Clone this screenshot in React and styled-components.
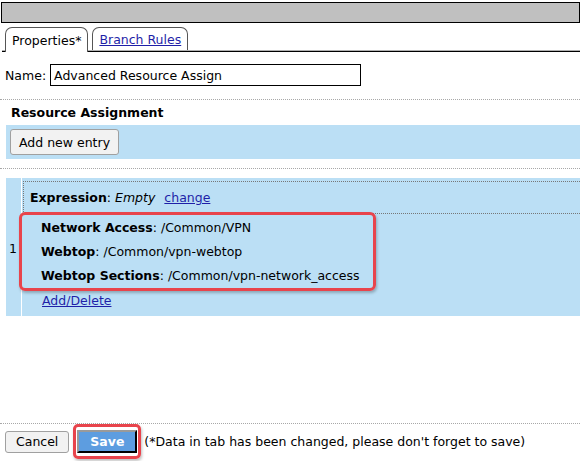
import styled, { createGlobalStyle } from 'styled-components'

const GlobalStyle = createGlobalStyle`
body {
  margin: 0;
  font-family: "DejaVu Sans", Verdana, sans-serif;
  font-size: 12px;
  color: #000;
  background: #fff;
}
`

const Page = styled.div`
width: 580px;
height: 461px;
display: flex;
flex-direction: column;
overflow: hidden;
`

const TitleBar = styled.div`
margin: 2px 0 0 1px;
height: 19px;
background: #c0c0c0;
border: 1px solid #000;
`

const TabRow = styled.div`
margin-top: 4px;
height: 24px;
display: flex;
align-items: flex-end;
gap: 4px;
padding-left: 3px;
border-bottom: 1px solid #000;
box-shadow: inset 0 -1px 0 #b0b0b0;
margin-left: 2px;
`

const Tab = styled.div`
height: ${p => (p.$active ? '24px' : '22px')};
margin-bottom: ${p => (p.$active ? '-1px' : '1px')};
padding: 0 6px;
display: flex;
align-items: center;
background: #fff;
border: 1px solid #555;
border-bottom: none;
border-radius: 7px 7px 0 0;
font-size: 12.5px;
color: ${p => (p.$active ? '#000' : '#1f1fa8')};
text-decoration: ${p => (p.$active ? 'none' : 'underline')};
position: relative;
`

const NameRow = styled.div`
margin-top: 12px;
display: flex;
align-items: center;
gap: 4px;
padding-left: 5px;
font-size: 12.5px;
`

const NameInput = styled.div`
width: 306px;
height: 20px;
border: 1px solid #000;
padding-left: 3px;
display: flex;
align-items: center;
`

const Dotted = styled.div`
margin-top: ${p => p.$top || 0}px;
border-top: 1px dotted #a8a8a8;
`

const Heading = styled.div`
height: 25px;
display: flex;
align-items: center;
padding-left: 11px;
font-weight: bold;
font-size: 12.5px;
`

const Band = styled.div`
margin-left: 6px;
height: 34px;
background: #bbdff5;
display: flex;
align-items: center;
padding-left: 4px;
`

const GrayButton = styled.button`
font: inherit;
font-size: 12.5px;
height: ${p => p.$h || 26}px;
padding: 0 ${p => p.$px || 8}px;
background: #f2f2f2;
border: 1px solid #a0a0a0;
border-radius: 3px;
color: #000;
`

const Table = styled.div`
margin: 9px 0 0 6px;
height: 138px;
background: #bbdff5;
display: flex;
`

const IndexCell = styled.div`
width: 16px;
border-right: 1px solid #fff;
display: flex;
align-items: center;
padding-left: 3px;
box-sizing: border-box;
padding-top: 2px;
font-size: 12.5px;
`

const Content = styled.div`
flex: 1;
padding: 3px 0 0 1px;
display: flex;
flex-direction: column;
`

const ExpressionRow = styled.div`
height: 31px;
line-height: 31px;
border-top: 1px dotted #777;
border-left: 1px dotted #777;
border-bottom: 1px dotted #777;
padding-left: 6px;
font-size: 12.5px;
white-space: nowrap;
`

const Link = styled.span`
color: #1f1fa8;
text-decoration: underline;
margin-left: ${p => p.$ml || 0}px;
`

const Highlight = styled.div`
margin: -2px 0 0 -4px;
width: 357px;
box-sizing: border-box;
border: 3px solid #e8444c;
border-radius: 6px;
box-shadow: 1px 2px 3px rgba(0, 0, 0, 0.25);
padding: 1px 0 0 19px;
display: flex;
flex-direction: column;
`

const ActionLine = styled.div`
height: 24px;
line-height: 24px;
font-size: 12.5px;
white-space: nowrap;
`

const AddDelete = styled.div`
padding: 2px 0 0 19px;
font-size: 12.5px;
`

const Spacer = styled.div`
flex: 1;
`

const Footer = styled.div`
margin-top: -2px;
height: 39px;
display: flex;
align-items: center;
padding-left: 5px;
gap: 4px;
font-size: 12.5px;
white-space: nowrap;
`

const SaveMark = styled.div`
border: 3px solid #e8444c;
border-radius: 5px;
box-shadow: 1px 2px 3px rgba(0, 0, 0, 0.25);
padding: 3px 1px;
margin-right: -1px;
display: flex;
`

const SaveButton = styled.button`
font: inherit;
font-size: 12.5px;
font-weight: bold;
color: #fff;
height: 23px;
width: 60px;
background: #5d9de0;
border: 2px solid #000;
border-top-color: #9a9a9a;
border-left-color: #9a9a9a;
`

const App = () => {
  return (
    <Page>
      <GlobalStyle />
      <TitleBar />
      <TabRow>
        <Tab $active>Properties*</Tab>
        <Tab>Branch Rules</Tab>
      </TabRow>
      <NameRow>
        Name:
        <NameInput>Advanced Resource Assign</NameInput>
      </NameRow>
      <Dotted $top={13} />
      <Heading>Resource Assignment</Heading>
      <Band>
        <GrayButton>Add new entry</GrayButton>
      </Band>
      <Dotted $top={9} />
      <Table>
        <IndexCell>1</IndexCell>
        <Content>
          <ExpressionRow>
            <b>Expression</b>: <i>Empty</i>
            <Link $ml={9}>change</Link>
          </ExpressionRow>
          <Highlight>
            <ActionLine><b>Network Access</b>: /Common/VPN</ActionLine>
            <ActionLine><b>Webtop</b>: /Common/vpn-webtop</ActionLine>
            <ActionLine><b>Webtop Sections</b>: /Common/vpn-network_access</ActionLine>
          </Highlight>
          <AddDelete><Link>Add/Delete</Link></AddDelete>
        </Content>
      </Table>
      <Spacer />
      <Dotted />
      <Footer>
        <GrayButton $h={22} $px={10}>Cancel</GrayButton>
        <SaveMark>
          <SaveButton>Save</SaveButton>
        </SaveMark>
        (*Data in tab has been changed, please don't forget to save)
      </Footer>
    </Page>
  )
}

export default App
